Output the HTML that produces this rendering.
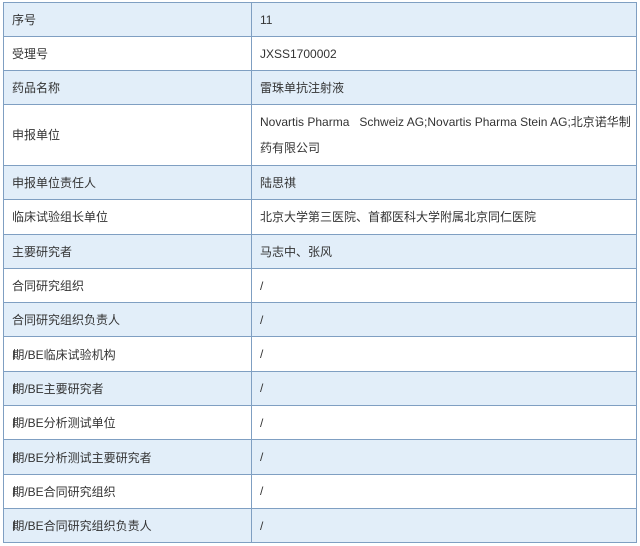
<!DOCTYPE html>
<html><head><meta charset="utf-8"><style>
html,body{margin:0;padding:0;background:#fff;width:640px;height:546px;overflow:hidden}
table{position:absolute;left:3px;top:2px;width:634px;border-collapse:collapse;font-family:"Liberation Sans","Noto Sans CJK SC",sans-serif;font-size:12px;color:#333}
td{border:1px solid #7f9fc2;height:34px;padding:0 4px 0 8px;box-sizing:border-box;vertical-align:middle}
td:first-child{width:248px}
tr:nth-child(odd) td{background:#e2eef9}
tr.tall td{height:61px;line-height:26px}
tr.b td{height:34.3px}
.r{letter-spacing:-3px}
</style></head><body>
<table>
<tr><td>序号</td><td>11</td></tr>
<tr><td>受理号</td><td>JXSS1700002</td></tr>
<tr><td>药品名称</td><td>雷珠单抗注射液</td></tr>
<tr class="tall"><td>申报单位</td><td><span style="white-space:nowrap">Novartis Pharma&nbsp;&nbsp; Schweiz AG;Novartis Pharma Stein AG;北京诺华制</span><br>药有限公司</td></tr>
<tr class="b"><td>申报单位责任人</td><td>陆思祺</td></tr>
<tr class="b"><td>临床试验组长单位</td><td>北京大学第三医院、首都医科大学附属北京同仁医院</td></tr>
<tr class="b"><td>主要研究者</td><td>马志中、张风</td></tr>
<tr class="b"><td>合同研究组织</td><td>/</td></tr>
<tr class="b"><td>合同研究组织负责人</td><td>/</td></tr>
<tr class="b"><td><span class="r">I</span>期/BE临床试验机构</td><td>/</td></tr>
<tr class="b"><td><span class="r">I</span>期/BE主要研究者</td><td>/</td></tr>
<tr class="b"><td><span class="r">I</span>期/BE分析测试单位</td><td>/</td></tr>
<tr class="b"><td><span class="r">I</span>期/BE分析测试主要研究者</td><td>/</td></tr>
<tr class="b"><td><span class="r">I</span>期/BE合同研究组织</td><td>/</td></tr>
<tr class="b"><td><span class="r">I</span>期/BE合同研究组织负责人</td><td>/</td></tr>
</table>
</body></html>
